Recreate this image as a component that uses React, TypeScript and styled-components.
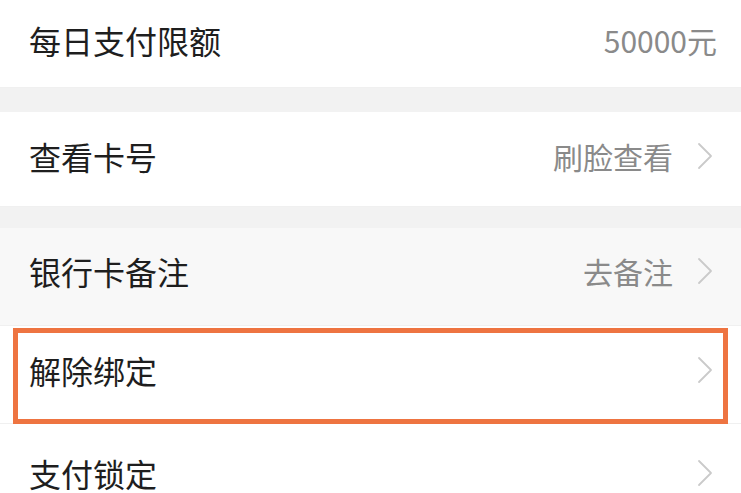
import React from "react";
import styled, { createGlobalStyle } from "styled-components";

const Global = createGlobalStyle`
  html, body { margin: 0; padding: 0; background: #ffffff; }
  body { font-family: "Noto Sans CJK SC", "Noto Sans", sans-serif; overflow: hidden; }
`;

const Page = styled.div`
  width: 741px;
  height: 493px;
  overflow: hidden;
  display: flex;
  flex-direction: column;
  background: #ffffff;
`;

const Gap = styled.div<{ $h: number }>`
  height: ${(p) => p.$h}px;
  flex: none;
  background: #f2f2f2;
`;

const Row = styled.div<{ $h: number; $bg?: string; $pr?: number; $pb?: number }>`
  position: relative;
  flex: none;
  height: ${(p) => p.$h}px;
  display: flex;
  align-items: center;
  justify-content: space-between;
  padding: 0 ${(p) => p.$pr ?? 28}px ${(p) => p.$pb ?? 4}px 29px;
  box-sizing: border-box;
  background: ${(p) => p.$bg ?? "#ffffff"};
  border-bottom: 1px solid #f0f0f0;
`;

const Label = styled.span`
  font-size: 32px;
  line-height: 1;
  color: #1e1e1e;
`;

const Right = styled.div`
  display: flex;
  align-items: center;
  gap: 24px;
`;

const Value = styled.span`
  font-size: 30px;
  line-height: 1;
  color: #8a8a8a;
`;

const Highlight = styled.div`
  position: absolute;
  left: 13px;
  right: 13px;
  top: 2px;
  bottom: -1px;
  border: 5px solid #ee7441;
  pointer-events: none;
`;

const Chevron = () => (
  <svg width="16" height="28" viewBox="0 0 16 28" fill="none">
    <path d="M2 2 L14 14 L2 26" stroke="#cacaca" strokeWidth="1.8" strokeLinecap="round" strokeLinejoin="round" />
  </svg>
);

export default function App() {
  return (
    <Page>
      <Global />
      <Row $h={88} $pr={24} $pb={8}>
        <Label>每日支付限额</Label>
        <Right>
          <Value>50000元</Value>
        </Right>
      </Row>
      <Gap $h={24} />
      <Row $h={95} $pb={6}>
        <Label>查看卡号</Label>
        <Right>
          <Value>刷脸查看</Value>
          <Chevron />
        </Right>
      </Row>
      <Gap $h={21} />
      <Row $h={98} $bg="#f8f8f8" $pb={12}>
        <Label>银行卡备注</Label>
        <Right>
          <Value>去备注</Value>
          <Chevron />
        </Right>
      </Row>
      <Row $h={98} $pb={10}>
        <Label>解除绑定</Label>
        <Right>
          <Chevron />
        </Right>
        <Highlight />
      </Row>
      <Row $h={98} $pb={0}>
        <Label>支付锁定</Label>
        <Right>
          <Chevron />
        </Right>
      </Row>
    </Page>
  );
}
